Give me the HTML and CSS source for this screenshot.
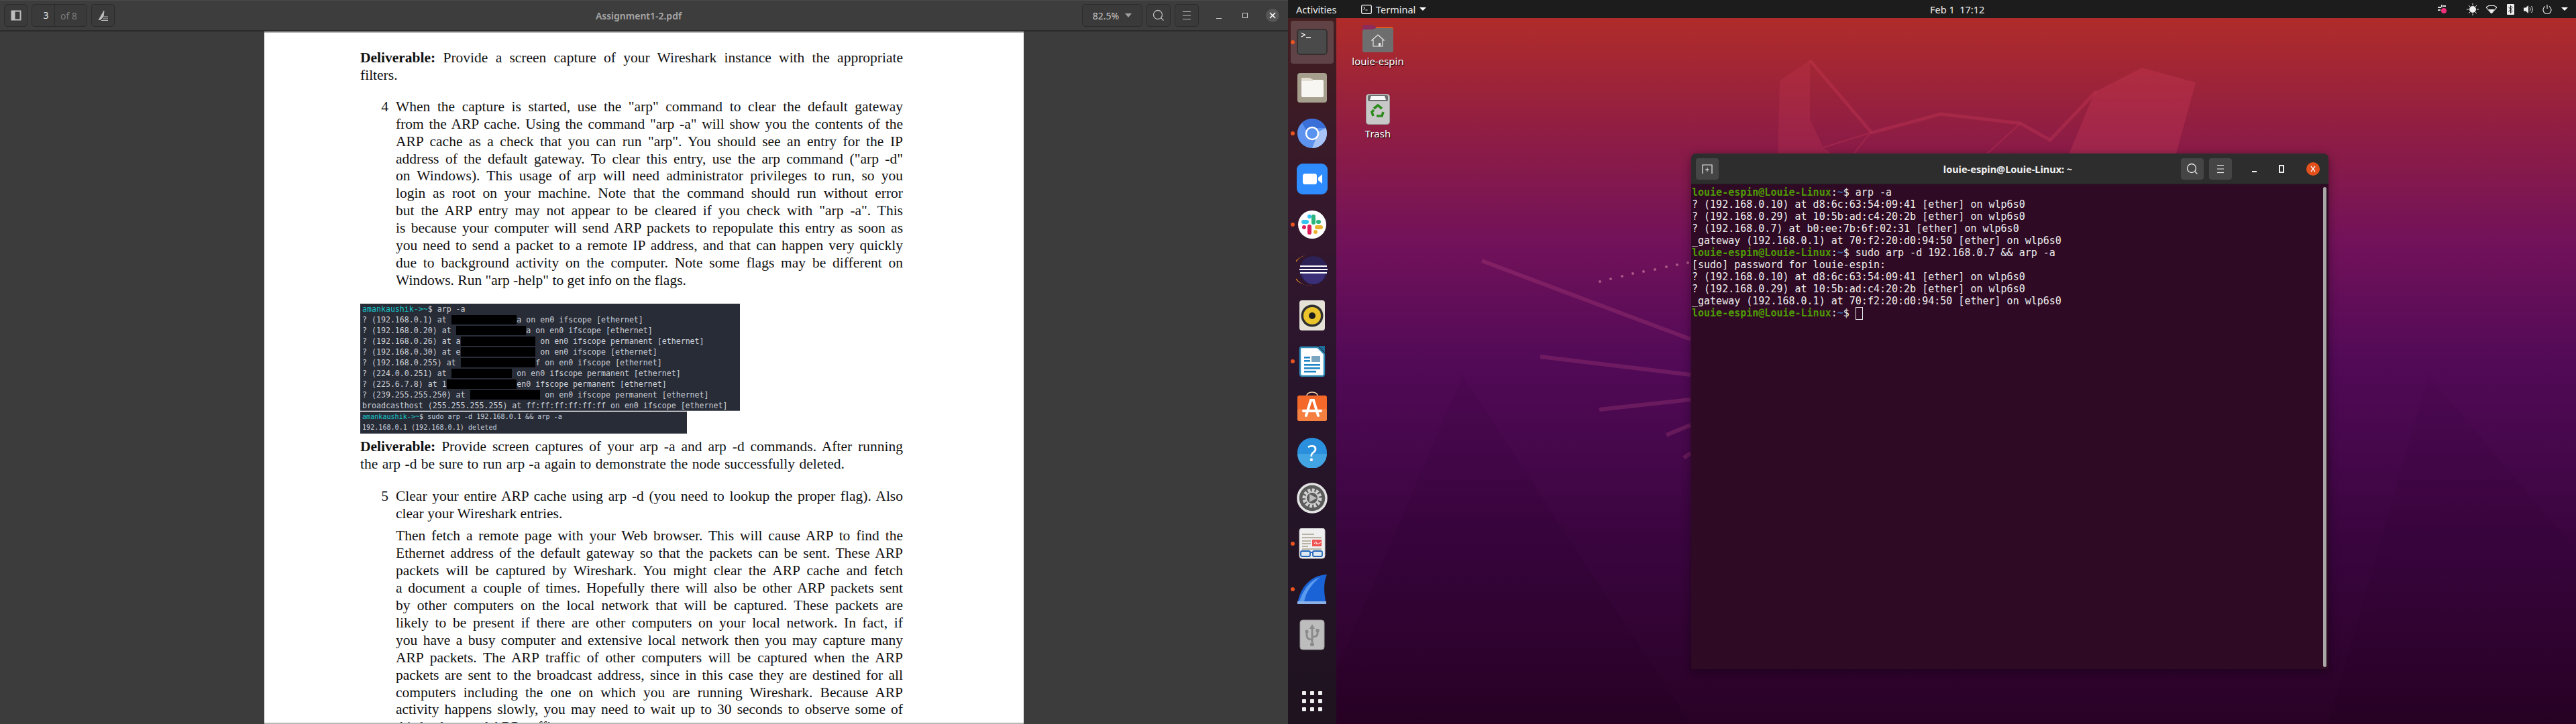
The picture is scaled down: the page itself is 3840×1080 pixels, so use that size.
FILE: index.html
```html
<!DOCTYPE html>
<html lang="en">
<head>
    <meta charset="UTF-8">
    <title>Assignment1-2.pdf</title>
    <link rel="stylesheet" href="styles.css">
</head>
<body>
<div class="screen">

    <!-- Document viewer, left half -->
    <section class="viewer">
        <header class="viewer-bar">
            <button class="tool tool-side">
                <svg viewBox="0 0 16 16" width="16" height="16"><rect x="1.5" y="1.5" width="13" height="13" fill="none" stroke="#bdbdbd" stroke-width="2"/><rect x="1.5" y="1.5" width="5" height="13" fill="#bdbdbd"/></svg>
            </button>
            <div class="tool pager"><span class="pager-now">3</span><span class="pager-of">of 8</span></div>
            <button class="tool tool-side">
                <svg viewBox="0 0 16 18" width="16" height="18"><polyline points="1,16 9,2 8,11 3,16" fill="#bdbdbd" stroke="#bdbdbd"/><line x1="9" y1="11" x2="15" y2="11" stroke="#bdbdbd"/><line x1="7" y1="14" x2="15" y2="14" stroke="#bdbdbd"/><line x1="5" y1="16.5" x2="15" y2="16.5" stroke="#bdbdbd"/></svg>
            </button>
            <div class="viewer-title">Assignment1-2.pdf</div>
            <div class="tool zoom-box">82.5%<span class="caret caret-grey"></span></div>
            <button class="tool tool-square">
                <svg viewBox="0 0 18 18" width="18" height="18"><circle cx="8" cy="8" r="6.5" fill="none" stroke="#bdbdbd" stroke-width="1.3"/><line x1="13" y1="13" x2="16.5" y2="16.5" stroke="#bdbdbd" stroke-width="1.3"/></svg>
            </button>
            <button class="tool tool-square">
                <svg viewBox="0 0 16 14" width="16" height="14"><line x1="2" y1="1.5" x2="14" y2="1.5" stroke="#bdbdbd"/><line x1="2" y1="7" x2="14" y2="7" stroke="#bdbdbd"/><line x1="2" y1="12.5" x2="14" y2="12.5" stroke="#bdbdbd"/></svg>
            </button>
            <div class="win-btns">
                <span class="win-min"></span>
                <span class="win-max"></span>
                <span class="win-close">
                    <svg viewBox="0 0 10 10" width="10" height="10"><line x1="1" y1="1" x2="9" y2="9" stroke="#fff" stroke-width="1.6"/><line x1="9" y1="1" x2="1" y2="9" stroke="#fff" stroke-width="1.6"/></svg>
                </span>
            </div>
        </header>

        <main class="viewer-body">
            <article class="page">
                <p class="para">
                    <span class="line"><b>Deliverable:</b> Provide a screen capture of your Wireshark instance with the appropriate</span>
                    <span class="line end">filters.</span>
                </p>

                <div class="item item-four">
                    <span class="item-num">4</span>
                    <p class="para">
                        <span class="line">When the capture is started, use the "arp" command to clear the default gateway</span>
                        <span class="line">from the ARP cache. Using the command "arp -a" will show you the contents of the</span>
                        <span class="line">ARP cache as a check that you can run "arp". You should see an entry for the IP</span>
                        <span class="line">address of the default gateway. To clear this entry, use the arp command ("arp -d"</span>
                        <span class="line">on Windows). This usage of arp will need administrator privileges to run, so you</span>
                        <span class="line">login as root on your machine. Note that the command should run without error</span>
                        <span class="line">but the ARP entry may not appear to be cleared if you check with "arp -a". This</span>
                        <span class="line">is because your computer will send ARP packets to repopulate this entry as soon as</span>
                        <span class="line">you need to send a packet to a remote IP address, and that can happen very quickly</span>
                        <span class="line">due to background activity on the computer. Note some flags may be different on</span>
                        <span class="line end">Windows. Run "arp -help" to get info on the flags.</span>
                    </p>
                </div>

                <div class="shot shot-large">
                    <div class="shot-line"><span class="shot-prompt">amankaushik-&gt;~</span>$ arp -a</div>
                    <div class="shot-line">? (192.168.0.1) at <span class="redact">              </span>a on en0 ifscope [ethernet]</div>
                    <div class="shot-line">? (192.168.0.20) at <span class="redact">               </span>a on en0 ifscope [ethernet]</div>
                    <div class="shot-line">? (192.168.0.26) at a<span class="redact">                </span> on en0 ifscope permanent [ethernet]</div>
                    <div class="shot-line">? (192.168.0.30) at e<span class="redact">                </span> on en0 ifscope [ethernet]</div>
                    <div class="shot-line">? (192.168.0.255) at <span class="redact">                </span>f on en0 ifscope [ethernet]</div>
                    <div class="shot-line">? (224.0.0.251) at <span class="redact">             </span> on en0 ifscope permanent [ethernet]</div>
                    <div class="shot-line">? (225.6.7.8) at 1<span class="redact">               </span>en0 ifscope permanent [ethernet]</div>
                    <div class="shot-line">? (239.255.255.250) at <span class="redact">               </span> on en0 ifscope permanent [ethernet]</div>
                    <div class="shot-line">broadcasthost (255.255.255.255) at ff:ff:ff:ff:ff:ff on en0 ifscope [ethernet]</div>
                </div>
                <div class="shot shot-small">
                    <div class="shot-line"><span class="shot-prompt">amankaushik-&gt;~</span>$ sudo arp -d 192.168.0.1 &amp;&amp; arp -a</div>
                    <div class="shot-line">192.168.0.1 (192.168.0.1) deleted</div>
                </div>

                <p class="para para-after-shot">
                    <span class="line"><b>Deliverable:</b> Provide screen captures of your arp -a and arp -d commands. After running</span>
                    <span class="line end wide">the arp -d be sure to run arp -a again to demonstrate the node successfully deleted.</span>
                </p>

                <div class="item item-five">
                    <span class="item-num">5</span>
                    <div>
                        <p class="para">
                            <span class="line">Clear your entire ARP cache using arp -d (you need to lookup the proper flag). Also</span>
                            <span class="line end">clear your Wireshark entries.</span>
                        </p>
                        <p class="para para-next">
                            <span class="line">Then fetch a remote page with your Web browser. This will cause ARP to find the</span>
                            <span class="line">Ethernet address of the default gateway so that the packets can be sent. These ARP</span>
                            <span class="line">packets will be captured by Wireshark. You might clear the ARP cache and fetch</span>
                            <span class="line">a document a couple of times. Hopefully there will also be other ARP packets sent</span>
                            <span class="line">by other computers on the local network that will be captured. These packets are</span>
                            <span class="line">likely to be present if there are other computers on your local network. In fact, if</span>
                            <span class="line">you have a busy computer and extensive local network then you may capture many</span>
                            <span class="line">ARP packets. The ARP traffic of other computers will be captured when the ARP</span>
                            <span class="line">packets are sent to the broadcast address, since in this case they are destined for all</span>
                            <span class="line">computers including the one on which you are running Wireshark. Because ARP</span>
                            <span class="line">activity happens slowly, you may need to wait up to 30 seconds to observe some of</span>
                            <span class="line end">this background ARP traffic.</span>
                        </p>
                    </div>
                </div>
            </article>
        </main>
    </section>

    <!-- Ubuntu desktop, right half -->
    <section class="desktop">
        <svg class="wallpaper" viewBox="1920 0 1920 1080" width="1920" height="1080">
            <polygon points="2520,1080 2180,560 1992,1000 1992,1080" fill="#000" opacity=".04"/>
            <polygon points="3470,1080 3620,560 3840,820 3840,1080" fill="#000" opacity=".03"/>
            <polygon points="2653,120 2698,90 2698,178 2718,220 2745,240 2650,240" fill="#d8405c" opacity=".2"/>
            <polygon points="3125,136 3193,101 3273,123 3241,240 3080,240 3116,153" fill="#d8405c" opacity=".28"/>
            <polyline points="2698,90 2790,198 2893,170 3012,184 3056,209 3125,136" fill="none" stroke="#d8405c" stroke-opacity=".28" stroke-width="5"/>
            <polyline points="2718,220 2788,198 2755,240" fill="none" stroke="#d8405c" stroke-opacity=".25" stroke-width="2"/>
            <polyline points="3012,184 2950,240" fill="none" stroke="#d8405c" stroke-opacity=".25" stroke-width="2"/>
            <line x1="2209" y1="389" x2="2520" y2="506" stroke="#d85c8c" stroke-opacity=".22" stroke-width="6"/>
            <line x1="2296" y1="532" x2="2520" y2="559" stroke="#d85c8c" stroke-opacity=".22" stroke-width="6"/>
            <line x1="2384" y1="611" x2="2520" y2="596" stroke="#d85c8c" stroke-opacity=".22" stroke-width="6"/>
            <line x1="2484" y1="649" x2="2520" y2="634" stroke="#d85c8c" stroke-opacity=".22" stroke-width="6"/>
            <line x1="2510" y1="683" x2="2520" y2="676" stroke="#d85c8c" stroke-opacity=".22" stroke-width="6"/>
            <g fill="#d889a8" opacity=".6">
                <circle cx="2385" cy="420" r="2"/><circle cx="2401" cy="416" r="2"/><circle cx="2418" cy="412" r="2"/>
                <circle cx="2434" cy="408" r="2"/><circle cx="2450" cy="405" r="2"/><circle cx="2467" cy="402" r="2"/>
                <circle cx="2484" cy="398" r="2"/><circle cx="2500" cy="395" r="2"/><circle cx="2516" cy="392" r="2"/>
            </g>
        </svg>

        <header class="topbar">
            <span class="top-activities">Activities</span>
            <span class="top-app">
                <svg viewBox="0 0 16 14" width="16" height="14"><rect x=".7" y=".7" width="14.6" height="12.6" rx="2" fill="none" stroke="#fff" stroke-width="1.2"/><polyline points="3.5,3.5 6,5.5 3.5,7.5" fill="none" stroke="#fff"/><line x1="6.5" y1="8" x2="9.5" y2="8" stroke="#fff"/></svg>
                Terminal
                <span class="caret caret-white"></span>
            </span>
            <span class="top-clock">Feb 1&nbsp; 17:12</span>
            <span class="top-tray">
                <svg class="tray-slack" viewBox="0 0 16 16" width="16" height="16"><g stroke="#ddd" stroke-width="2"><line x1="1" y1="5" x2="6" y2="5"/><line x1="7" y1="1" x2="7" y2="5"/><line x1="1" y1="9" x2="5" y2="9"/><line x1="9" y1="3" x2="13" y2="3"/></g><circle cx="10" cy="10" r="4" fill="#f0307c"/></svg>
                <svg class="tray-sun" viewBox="0 0 18 18" width="18" height="18"><circle cx="9" cy="9" r="5" fill="#eee"/><g stroke="#eee"><line x1="9" y1="0" x2="9" y2="3"/><line x1="9" y1="15" x2="9" y2="18"/><line x1="0" y1="9" x2="3" y2="9"/><line x1="15" y1="9" x2="18" y2="9"/><line x1="3" y1="3" x2="5" y2="5"/><line x1="13" y1="13" x2="15" y2="15"/><line x1="15" y1="3" x2="13" y2="5"/><line x1="3" y1="15" x2="5" y2="13"/></g></svg>
                <svg class="tray-wifi" viewBox="0 0 16 12" width="16" height="12"><polygon points="0,3 4,.5 12,.5 16,3 8,12" fill="none" stroke="#eee" stroke-width="1.1"/><polygon points="3.5,6 12.5,6 8,12" fill="#eee"/></svg>
                <svg class="tray-bt" viewBox="0 0 11 16" width="11" height="16"><rect width="11" height="16" rx="1" fill="#eee"/><polyline points="2.5,4.5 8,10.5 5.5,13.5 5.5,2.5 8,5.5 2.5,11.5" fill="none" stroke="#1c1c1c"/></svg>
                <svg class="tray-vol" viewBox="0 0 15 14" width="15" height="14"><polygon points="0,4.5 3,4.5 7,1 7,13 3,9.5 0,9.5" fill="#eee"/><path d="M9 4 Q11 7 9 10 M11.5 2 Q15 7 11.5 12" fill="none" stroke="#eee"/></svg>
                <svg class="tray-power" viewBox="0 0 14 14" width="14" height="14"><path d="M4 2.5 A6 6 0 1 0 10 2.5" fill="none" stroke="#eee" stroke-width="1.1"/><line x1="7" y1="0" x2="7" y2="6" stroke="#eee" stroke-width="1.1"/></svg>
                <span class="caret caret-white"></span>
            </span>
        </header>

        <nav class="dock">
            <div class="dock-item dock-active running">
                <svg viewBox="0 0 46 46" width="46" height="46"><rect x="1" y="4" width="44" height="37" rx="4" fill="#4a4a4a" stroke="#2a2a2a" stroke-width="1.5"/><polyline points="7,9 12,12 7,15" fill="none" stroke="#fff" stroke-width="1.4"/><line x1="14" y1="16" x2="21" y2="16" stroke="#fff" stroke-width="1.4"/></svg>
            </div>
            <div class="dock-item">
                <svg viewBox="0 0 46 46" width="46" height="46"><rect x="1" y="1" width="44" height="44" rx="4" fill="#a79f8d"/><path d="M7 10 a2 2 0 0 1 2-2 h10 l5 3 h14 a2 2 0 0 1 2 2 v22 a2 2 0 0 1-2 2 H9 a2 2 0 0 1-2-2z" fill="#f7f6f3"/><path d="M7 10 a2 2 0 0 1 2-2 h10 l5 3 v2 H7z" fill="#e2ded2"/></svg>
            </div>
            <div class="dock-item running">
                <svg viewBox="0 0 46 46" width="46" height="46"><circle cx="23" cy="23" r="22" fill="#5d93ef"/><path d="M23 1 a22 22 0 0 1 20.5 14 H23 a8 8 0 0 0-8 5 L8 7 A22 22 0 0 1 23 1z" fill="#3a6fd8"/><path d="M43.5 15 A22 22 0 0 1 23 45 L30 28 a8 8 0 0 0 1-7z" fill="#a8c4f6"/><circle cx="23" cy="23" r="9" fill="#5a92f0" stroke="#fff" stroke-width="2.4"/></svg>
            </div>
            <div class="dock-item">
                <svg viewBox="0 0 46 46" width="46" height="46"><rect x="0" y="0" width="46" height="46" rx="9" fill="#2e8cff"/><rect x="9" y="15" width="21" height="16" rx="3.5" fill="#fff"/><polygon points="32,21 38,16 38,30 32,25" fill="#fff"/></svg>
            </div>
            <div class="dock-item running">
                <svg viewBox="0 0 46 46" width="46" height="46"><circle cx="23" cy="23" r="21" fill="#fff"/><g stroke-width="6" stroke-linecap="round"><line x1="15" y1="19" x2="10" y2="19" stroke="#36c5f0"/><line x1="25" y1="11" x2="25" y2="20" stroke="#2eb67d"/><line x1="32" y1="19" x2="33" y2="19" stroke="#2eb67d"/><line x1="30" y1="27" x2="36" y2="27" stroke="#ecb22e"/><line x1="28" y1="34" x2="28" y2="34" stroke="#ecb22e"/><line x1="19" y1="26" x2="19" y2="35" stroke="#e01e5a"/><line x1="11" y1="27" x2="11" y2="27" stroke="#e01e5a"/><line x1="19" y1="11" x2="19" y2="11" stroke="#36c5f0"/></g></svg>
            </div>
            <div class="dock-item">
                <svg viewBox="0 0 48 46" width="48" height="46"><path d="M14 1 A22 22 0 0 0 24 45 A24 22 0 0 1 14 1z" fill="#f0901e"/><circle cx="26" cy="23" r="21" fill="#2c2255"/><path d="M9 27 h34 A17 17 0 0 1 9 27z" fill="#3b2f78"/><g stroke="#fff" stroke-width="2"><line x1="6" y1="17" x2="46" y2="17"/><line x1="5" y1="22" x2="47" y2="22"/><line x1="6" y1="27" x2="46" y2="27"/></g></svg>
            </div>
            <div class="dock-item">
                <svg viewBox="0 0 46 46" width="46" height="46"><rect x="4" y="0" width="38" height="45" rx="4" fill="#e5e1d6"/><circle cx="23" cy="23" r="16.5" fill="#2f2f2f"/><circle cx="23" cy="23" r="13" fill="#eac42a"/><circle cx="23" cy="23" r="5" fill="#1e1e1e"/></svg>
            </div>
            <div class="dock-item running">
                <svg viewBox="0 0 46 46" width="46" height="46"><path d="M5 4 a2 2 0 0 1 2-2 h24 l10 10 v30 a3 3 0 0 1-3 3 H8 a3 3 0 0 1-3-3z" fill="#fff" stroke="#2d8bb8" stroke-width="2.4"/><polygon points="32,0 42,0 42,10" fill="#1c6d99"/><rect x="11" y="16" width="9" height="2.6" fill="#1f86c5"/><rect x="11" y="21" width="9" height="2.6" fill="#1f86c5"/><rect x="22" y="15" width="13" height="9" fill="#7aa6c0"/><rect x="11" y="27" width="24" height="2.6" fill="#1f86c5"/><rect x="11" y="32" width="24" height="2.6" fill="#1f86c5"/><rect x="11" y="37" width="18" height="2.6" fill="#1f86c5"/></svg>
            </div>
            <div class="dock-item">
                <svg viewBox="0 0 46 46" width="46" height="46"><path d="M15 8 v-2 a8 5 0 0 1 16 0 v2" fill="none" stroke="#f3d0a8" stroke-width="1.6"/><rect x="1" y="6" width="44" height="38" rx="3" fill="#f4692a"/><rect x="1" y="26" width="44" height="18" rx="3" fill="#f58040"/><g stroke="#fff" stroke-linecap="round"><line x1="14" y1="36" x2="21" y2="13" stroke-width="4"/><line x1="32" y1="36" x2="25" y2="13" stroke-width="4"/><line x1="21" y1="13" x2="25" y2="13" stroke-width="4"/><line x1="10" y1="29" x2="36" y2="29" stroke-width="4"/></g></svg>
            </div>
            <div class="dock-item">
                <svg viewBox="0 0 46 46" width="46" height="46"><circle cx="23" cy="23" r="22" fill="#2a8fdc"/><path d="M1 25 h44 A22 22 0 0 1 1 25z" fill="#43a4e4"/><text x="23" y="36" class="help-mark">?</text></svg>
            </div>
            <div class="dock-item">
                <svg viewBox="0 0 46 46" width="46" height="46"><circle cx="23" cy="23" r="21" fill="#5b5b5b" stroke="#e3e3e3" stroke-width="3.5"/><circle cx="23" cy="23" r="12" fill="none" stroke="#cfcfcf" stroke-width="5" stroke-dasharray="4 2.2"/><circle cx="23" cy="23" r="9" fill="none" stroke="#d0d0d0" stroke-width="2"/><polygon points="19,17 30,23 19,29" fill="#bcbcbc"/></svg>
            </div>
            <div class="dock-item running">
                <svg viewBox="0 0 46 46" width="46" height="46"><rect x="4" y="0" width="38" height="45" rx="4" fill="#efefef" stroke="#cfcfcf"/><g fill="#b8b3a3"><rect x="8" y="8" width="18" height="2"/><rect x="8" y="13" width="29" height="2"/><rect x="8" y="18" width="13" height="2"/><rect x="8" y="22" width="13" height="2"/><rect x="8" y="26" width="9" height="2"/><rect x="8" y="30" width="29" height="2"/></g><rect x="23" y="17" width="14" height="10" fill="#ef5350"/><path d="M26 23 q4-6 3 0 q4 1 7-2" fill="none" stroke="#fff"/><g fill="#dfe9f2" stroke="#1f65b8" stroke-width="1.8"><rect x="6" y="34" width="14" height="8" rx="2"/><rect x="24" y="34" width="14" height="8" rx="2"/></g><line x1="20" y1="36" x2="24" y2="36" stroke="#1f65b8" stroke-width="1.8"/></svg>
            </div>
            <div class="dock-item running">
                <svg viewBox="0 0 48 46" width="48" height="46"><path d="M2 45 C6 20 22 2 46 1 C40 14 42 32 45 45z" fill="#1a63d6"/><path d="M4 44 C10 24 22 9 36 5 C24 14 14 28 12 42z" fill="#5b9bee"/><rect x="2" y="41" width="43" height="4" fill="#8cb1e6"/></svg>
            </div>
            <div class="dock-item">
                <svg viewBox="0 0 46 46" width="46" height="46"><rect x="5" y="1" width="36" height="44" rx="4" fill="#bdbdbd" stroke="#9c9c9c"/><g fill="none" stroke="#8b8b8b" stroke-width="3"><line x1="23" y1="10" x2="23" y2="37"/><path d="M23 30 q-8 0-8-6 v-5"/><path d="M23 26 q8 0 8-5 v-4"/></g><polygon points="23,7 19,14 27,14" fill="#8b8b8b"/><circle cx="15" cy="18" r="2.5" fill="#8b8b8b"/><rect x="28.500" y="14" width="5" height="5" fill="#8b8b8b"/><rect x="20" y="35" width="6" height="5" rx="2" fill="#8b8b8b"/></svg>
            </div>
            <div class="dock-item dock-apps">
                <div class="apps-grid">
                    <i></i><i></i><i></i><i></i><i></i><i></i><i></i><i></i><i></i>
                </div>
            </div>
        </nav>

        <div class="desk-icon desk-home">
            <svg viewBox="0 0 46 42" width="46" height="42"><path d="M0 4 a3 3 0 0 1 3-3 h12 l5 3 h23 a3 3 0 0 1 3 3 v10 H0z" fill="#8c2c5c"/><path d="M20 4 h23 a3 3 0 0 1 3 3 v8 H20z" fill="#e2561f"/><path d="M0 10 a3 3 0 0 1 3-2 h12 l5-2 h23 a3 3 0 0 1 3 3 v30 a3 3 0 0 1-3 3 H3 a3 3 0 0 1-3-3z" fill="#6e6e6e"/><polygon points="23,16 32,24 30,24 30,33 16,33 16,24 14,24" fill="none" stroke="#eee" stroke-width="1.1"/><rect x="24" y="28" width="3" height="5" fill="#eee"/></svg>
            <span class="desk-label">louie-espin</span>
        </div>
        <div class="desk-icon desk-trash">
            <svg viewBox="0 0 36 46" width="36" height="46"><rect x=".5" y=".5" width="35" height="45" rx="4" fill="#c8c8c8" stroke="#9a9a9a"/><rect x="3" y="2" width="30" height="9" rx="2" fill="#6c6c6c"/><polygon points="6,9 8,3 28,3 30,9" fill="#f8f8f8"/><g fill="none" stroke="#2e8b1e" stroke-width="3.6"><path d="M12 22 L18 17 L24 22"/><path d="M26 27 L24 33 L16 33"/><path d="M11 33 L9 27 L12 24"/></g></svg>
            <span class="desk-label">Trash</span>
        </div>

        <div class="term">
            <header class="term-bar">
                <div class="term-bar-left">
                    <button class="term-btn">
                        <svg viewBox="0 0 16 16" width="16" height="16"><path d="M1 15 V2 h14 V15" fill="none" stroke="#eee" stroke-width="1.2"/><line x1="5" y1="9" x2="11" y2="9" stroke="#eee"/><line x1="8" y1="6" x2="8" y2="12" stroke="#eee"/></svg>
                    </button>
                </div>
                <div class="term-title">louie-espin@Louie-Linux: ~</div>
                <div class="term-bar-right">
                    <button class="term-btn">
                        <svg viewBox="0 0 18 18" width="18" height="18"><circle cx="8" cy="8" r="6.5" fill="none" stroke="#eee" stroke-width="1.3"/><line x1="13" y1="13" x2="16.5" y2="16.5" stroke="#eee" stroke-width="1.3"/></svg>
                    </button>
                    <button class="term-btn">
                        <svg viewBox="0 0 16 14" width="16" height="14"><line x1="3" y1="1.5" x2="13" y2="1.5" stroke="#eee" stroke-width="1.2"/><line x1="3" y1="7" x2="13" y2="7" stroke="#eee" stroke-width="1.2"/><line x1="3" y1="12.500" x2="13" y2="12.500" stroke="#eee" stroke-width="1.2"/></svg>
                    </button>
                    <span class="term-min"></span>
                    <span class="term-max"></span>
                    <span class="term-close">
                        <svg viewBox="0 0 10 10" width="10" height="10"><line x1="2" y1="1" x2="8" y2="9" stroke="#fff" stroke-width="1.3"/><line x1="8" y1="1" x2="2" y2="9" stroke="#fff" stroke-width="1.3"/></svg>
                    </span>
                </div>
            </header>
            <div class="term-body">
                <div class="term-line"><span class="pr-user">louie-espin@Louie-Linux</span>:<span class="pr-path">~</span>$ arp -a</div>
                <div class="term-line">? (192.168.0.10) at d8:6c:63:54:09:41 [ether] on wlp6s0</div>
                <div class="term-line">? (192.168.0.29) at 10:5b:ad:c4:20:2b [ether] on wlp6s0</div>
                <div class="term-line">? (192.168.0.7) at b0:ee:7b:6f:02:31 [ether] on wlp6s0</div>
                <div class="term-line">_gateway (192.168.0.1) at 70:f2:20:d0:94:50 [ether] on wlp6s0</div>
                <div class="term-line"><span class="pr-user">louie-espin@Louie-Linux</span>:<span class="pr-path">~</span>$ sudo arp -d 192.168.0.7 &amp;&amp; arp -a</div>
                <div class="term-line">[sudo] password for louie-espin:</div>
                <div class="term-line">? (192.168.0.10) at d8:6c:63:54:09:41 [ether] on wlp6s0</div>
                <div class="term-line">? (192.168.0.29) at 10:5b:ad:c4:20:2b [ether] on wlp6s0</div>
                <div class="term-line">_gateway (192.168.0.1) at 70:f2:20:d0:94:50 [ether] on wlp6s0</div>
                <div class="term-line"><span class="pr-user">louie-espin@Louie-Linux</span>:<span class="pr-path">~</span>$ <span class="cursor"></span></div>
                <div class="term-scroll"></div>
            </div>
        </div>
    </section>
</div>
</body>
</html>
```

FILE: styles.css
```css
* {
    margin: 0;
    padding: 0;
    box-sizing: border-box;
}

html, body {
    width: 3840px;
    height: 1080px;
    overflow: hidden;
}

body {
    font-family: "Noto Sans", sans-serif;
    background: #3c3c3c;
}

button {
    background: none;
    border: none;
    font: inherit;
}

.screen {
    display: flex;
    width: 3840px;
    height: 1080px;
}

/* Carets */
.caret {
    display: inline-block;
    width: 0;
    height: 0;
    border-left: 5px solid transparent;
    border-right: 5px solid transparent;
}
.caret-grey { border-top: 6px solid #a0a0a0; margin-left: 9px; }
.caret-white { border-top: 5px solid #fff; }

/* Document viewer */
.viewer {
    width: 1920px;
    height: 1080px;
    display: flex;
    flex-direction: column;
    background: #3c3c3c;
}

.viewer-bar {
    height: 47px;
    flex: none;
    display: flex;
    align-items: center;
    gap: 6px;
    padding: 0 13px 0 6px;
    background: #3d3d3d;
    border-top: 1px solid #4a4a4a;
    border-bottom: 2px solid #2b2b2b;
}

.tool {
    height: 34px;
    display: flex;
    align-items: center;
    justify-content: center;
    background: #3a3a3a;
    border: 1px solid #2b2b2b;
    border-radius: 5px;
    color: #c8c8c8;
    font-size: 14px;
}

.tool-side { width: 35px; }
.tool-square { width: 36px; }

.pager { width: 83px; }
.pager-now {
    width: 34px;
    height: 100%;
    padding-left: 8px;
    line-height: 32px;
    text-align: center;
    color: #e4e4e4;
    border-right: 1px solid #2b2b2b;
}
.pager-of {
    flex: 1;
    padding-right: 6px;
    text-align: center;
    color: #7c7c7c;
}

.viewer-title {
    flex: 1;
    padding-left: 120px;
    text-align: center;
    white-space: nowrap;
    color: #a8a8a8;
    font-size: 14px;
    font-weight: 600;
}

.zoom-box { width: 90px; }

.win-btns {
    display: flex;
    align-items: center;
    margin-left: 20px;
}
.win-min { width: 8px; height: 1px; background: #c8c8c8; margin: 8px 31px 0 0; }
.win-max { width: 8px; height: 8px; border: 1px solid #c8c8c8; margin-right: 27px; }
.win-close {
    width: 20px;
    height: 20px;
    display: flex;
    align-items: center;
    justify-content: center;
    border-radius: 50%;
    background: #565656;
}

.viewer-body {
    flex: 1;
    min-height: 0;
    display: flex;
    justify-content: center;
    overflow: hidden;
}

.page {
    width: 1132px;
    height: 100%;
    overflow: hidden;
    padding: 25px 180px 0 143px;
    background: #fff;
    color: #111;
    font-family: "Liberation Serif", serif;
    font-size: 21.5px;
    line-height: 25.9px;
    border-top: 2px solid #bcbcbc;
    border-bottom: 2px solid #b8b8b8;
}

.line {
    display: block;
    text-align: justify;
    text-align-last: justify;
}
.line.end { text-align-last: left; }
.line.wide { word-spacing: 1px; }

.item {
    display: grid;
    grid-template-columns: 42px 1fr;
    gap: 11px;
}
.item-num { text-align: right; }
.item-four { margin-top: 21px; }
.item-five { margin-top: 22px; }
.para-next { margin-top: 8px; }
.para-after-shot { margin-top: 7px; }

.shot {
    background: #282c37;
    color: #cdd1d8;
    font-family: "DejaVu Sans Mono", monospace;
    padding: 0 0 0 3px;
    overflow: hidden;
    border-bottom: 1px solid #5b5f68;
}
.shot-line {
    white-space: pre;
    line-height: 16px;
}
.shot-large {
    width: 566px;
    height: 160px;
    margin-top: 21px;
    font-size: 11.6px;
}
.shot-small {
    width: 487px;
    height: 33px;
    margin-top: 1px;
    font-size: 10.1px;
}
.shot-prompt { color: #15c8c8; }
.redact { background: #000; }

/* Desktop */
.desktop {
    position: relative;
    width: 1920px;
    height: 1080px;
    display: flex;
    flex-direction: column;
    overflow: hidden;
    background: linear-gradient(180deg, #b32d27 0, #ad2b2b 40px, #8f1d44 200px, #72125a 360px, #520a57 540px, #3a053f 800px, #290226 1080px);
}

.wallpaper {
    position: absolute;
    left: 0;
    top: 0;
}

.topbar {
    position: relative;
    height: 27px;
    flex: none;
    display: flex;
    align-items: center;
    background: #1c1c1c;
    color: #eee;
    font-size: 14.5px;
}
.top-activities { margin-left: 12px; width: 97px; }
.top-app {
    display: flex;
    align-items: center;
    gap: 6px;
    width: 848px;
}
.top-clock { width: 250px; }
.top-tray {
    display: flex;
    align-items: center;
    margin-left: 506px;
}
.tray-sun { margin-left: 28px; }
.tray-wifi { margin-left: 11px; }
.tray-bt { margin-left: 15px; }
.tray-vol { margin-left: 14px; }
.tray-power { margin-left: 13px; }
.top-tray .caret { margin-left: 14px; }

.dock {
    position: relative;
    flex: 1;
    width: 72px;
    display: flex;
    flex-direction: column;
    align-items: center;
    padding-top: 2px;
    background: rgba(28, 26, 30, 0.74);
}
.dock-item {
    position: relative;
    width: 64px;
    height: 68px;
    flex: none;
    display: flex;
    align-items: center;
    justify-content: center;
}
.dock-active::before {
    content: '';
    position: absolute;
    left: 0;
    top: 2px;
    width: 64px;
    height: 64px;
    border-radius: 4px;
    background: rgba(255, 255, 255, 0.17);
}
.dock-item svg { position: relative; }
.running::after {
    content: '';
    position: absolute;
    left: 0;
    top: 31px;
    width: 6px;
    height: 6px;
    border-radius: 50%;
    background: #e95420;
}
.dock-apps { margin-top: auto; }
.apps-grid {
    display: grid;
    grid-template-columns: repeat(3, 6px);
    gap: 6px;
}
.apps-grid i {
    width: 6px;
    height: 6px;
    border-radius: 1px;
    background: #eee;
}
.help-mark {
    fill: #fff;
    font-family: "Noto Sans", sans-serif;
    font-size: 32px;
    text-anchor: middle;
}

.desk-icon {
    position: absolute;
    width: 100px;
    display: flex;
    flex-direction: column;
    align-items: center;
}
.desk-home { left: 84px; top: 36px; }
.desk-trash { left: 84px; top: 140px; }
.desk-label {
    margin-top: 3px;
    color: #fff;
    font-size: 15px;
    line-height: 20px;
    text-shadow: 1px 1px 1px #000;
}

.term {
    position: absolute;
    left: 601px;
    top: 229px;
    width: 950px;
    height: 769px;
    display: flex;
    flex-direction: column;
    border-radius: 7px 7px 0 0;
    overflow: hidden;
    box-shadow: 0 3px 14px rgba(0, 0, 0, 0.4);
}
.term-bar {
    height: 46px;
    flex: none;
    display: grid;
    grid-template-columns: 1fr auto 1fr;
    align-items: center;
    padding: 0 13px 0 7px;
    background: #2d2d2d;
    border-bottom: 1px solid #1f1f1f;
}
.term-bar-right {
    display: flex;
    align-items: center;
    justify-content: flex-end;
    gap: 8px;
}
.term-btn {
    width: 34px;
    height: 32px;
    display: flex;
    align-items: center;
    justify-content: center;
    background: #454545;
    border-radius: 4px;
}
.term-title {
    color: #f2f2f2;
    font-size: 14.5px;
    font-weight: 700;
}
.term-min { width: 7px; height: 2px; background: #eee; margin: 8px 0 0 22px; }
.term-max { width: 8px; height: 12px; border: 2px solid #eee; margin-left: 25px; }
.term-close {
    width: 20px;
    height: 20px;
    margin-left: 25px;
    display: flex;
    align-items: center;
    justify-content: center;
    border-radius: 50%;
    background: #e2501c;
}
.term-body {
    position: relative;
    flex: 1;
    padding: 3px 0 0 1px;
    background: #2f0a24;
    color: #eeeeec;
    font-family: "DejaVu Sans Mono", monospace;
    font-size: 15px;
}
.term-line {
    height: 18px;
    line-height: 18px;
    white-space: pre;
}
.pr-user { color: #4e9a06; font-weight: 700; }
.pr-path { color: #3465a4; font-weight: 700; }
.cursor {
    display: inline-block;
    width: 11px;
    height: 19px;
    vertical-align: top;
    border: 1px solid #eee;
}
.term-scroll {
    position: absolute;
    right: 3px;
    top: 4px;
    bottom: 3px;
    width: 5px;
    border-radius: 3px;
    background: #a9a6a8;
}
```
